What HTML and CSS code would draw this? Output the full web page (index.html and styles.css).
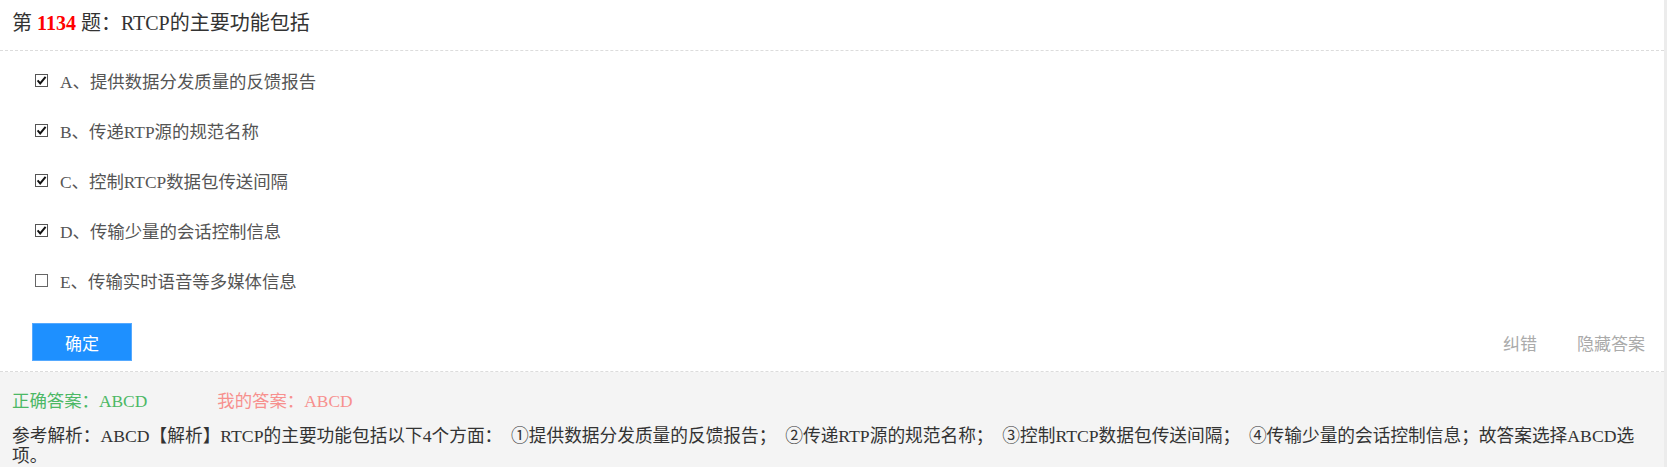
FILE: index.html
```html
<!DOCTYPE html>
<html lang="zh-CN">
<head>
<meta charset="utf-8">
<title>第 1134 题</title>
<link rel="stylesheet" href="styles.css">
</head>
<body>
<div class="page">
  <div class="question">
    <div class="title">第 <b class="num">1134</b> 题：RTCP的主要功能包括</div>
    <ul class="options">
      <li class="option"><span class="box"><svg viewBox="0 0 13 13" width="13" height="13"><rect x="0.5" y="0.5" width="12" height="12" fill="#fff" stroke="#555"/><path d="M2.6 6.4 L5.2 9.4 L10.6 2.9" fill="none" stroke="#111" stroke-width="2"/></svg></span><span class="otext">A、提供数据分发质量的反馈报告</span></li>
      <li class="option"><span class="box"><svg viewBox="0 0 13 13" width="13" height="13"><rect x="0.5" y="0.5" width="12" height="12" fill="#fff" stroke="#555"/><path d="M2.6 6.4 L5.2 9.4 L10.6 2.9" fill="none" stroke="#111" stroke-width="2"/></svg></span><span class="otext">B、传递RTP源的规范名称</span></li>
      <li class="option"><span class="box"><svg viewBox="0 0 13 13" width="13" height="13"><rect x="0.5" y="0.5" width="12" height="12" fill="#fff" stroke="#555"/><path d="M2.6 6.4 L5.2 9.4 L10.6 2.9" fill="none" stroke="#111" stroke-width="2"/></svg></span><span class="otext">C、控制RTCP数据包传送间隔</span></li>
      <li class="option"><span class="box"><svg viewBox="0 0 13 13" width="13" height="13"><rect x="0.5" y="0.5" width="12" height="12" fill="#fff" stroke="#555"/><path d="M2.6 6.4 L5.2 9.4 L10.6 2.9" fill="none" stroke="#111" stroke-width="2"/></svg></span><span class="otext">D、传输少量的会话控制信息</span></li>
      <li class="option"><span class="box"><svg viewBox="0 0 13 13" width="13" height="13"><rect x="0.5" y="0.5" width="12" height="12" fill="#fff" stroke="#666"/></svg></span><span class="otext">E、传输实时语音等多媒体信息</span></li>
    </ul>
    <div class="actions">
      <button class="btn">确定</button>
      <div class="links"><span class="link">纠错</span><span class="link">隐藏答案</span></div>
    </div>
  </div>
  <div class="analysis">
    <div class="answers"><span class="right">正确答案：ABCD</span><span class="mine">我的答案：ABCD</span></div>
    <div class="explain">参考解析：ABCD【解析】RTCP的主要功能包括以下4个方面：　①提供数据分发质量的反馈报告；　②传递RTP源的规范名称；　③控制RTCP数据包传送间隔；　④传输少量的会话控制信息；故答案选择ABCD选项。</div>
  </div>
</div>
</body>
</html>
```

FILE: styles.css
```css
html, body {
  margin: 0;
  padding: 0;
}
body {
  background: #ececec;
  font-family: "Liberation Serif", "Noto Sans CJK SC", serif;
  font-size: 17.4px;
  color: #333;
}
.page {
  width: 1664px;
  height: 467px;
  overflow: hidden;
}
.question {
  background: #fff;
}
.title {
  height: 46px;
  line-height: 46px;
  padding: 0 12px 4px;
  font-size: 20px;
  color: #333;
  border-bottom: 1px dashed #dcdcdc;
}
.num {
  color: #f00;
  font-weight: bold;
}
.options {
  list-style: none;
  margin: 0;
  padding: 4px 0 0 35px;
}
.option {
  height: 50px;
  display: flex;
  align-items: center;
  color: #555;
}
.box {
  width: 13px;
  height: 13px;
  display: flex;
  margin-right: 12px;
}
.actions {
  display: flex;
  justify-content: space-between;
  align-items: center;
  padding: 18px 19px 10px 32px;
  border-bottom: 1px dashed #dcdcdc;
}
.btn {
  width: 100px;
  height: 38px;
  background: #1e90ff;
  border: 1px solid #55a9ff;
  color: #fff;
  font-family: "Noto Sans CJK SC", sans-serif;
  font-size: 17px;
  padding: 0;
}
.links {
  display: flex;
  gap: 40px;
  font-family: "Noto Sans CJK SC", sans-serif;
  font-size: 17px;
  color: #aaa;
}
.analysis {
  background: #f4f4f4;
  padding: 19px 12px 0;
  height: 120px;
}
.answers {
  line-height: 20px;
  display: flex;
}
.right {
  color: #4cb865;
}
.mine {
  color: #f7908e;
  margin-left: 70px;
}
.explain {
  margin-top: 15px;
  line-height: 20px;
  font-size: 17.7px;
  color: #333;
}
```
